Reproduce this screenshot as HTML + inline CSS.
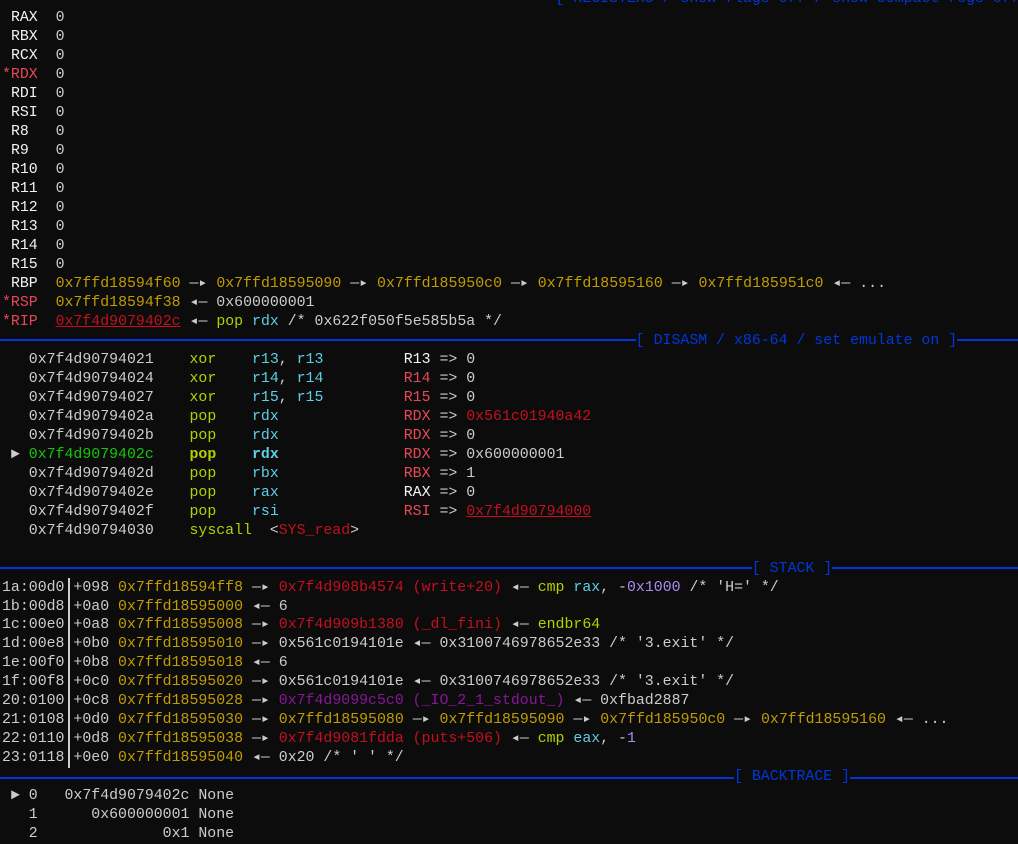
<!DOCTYPE html>
<html><head><meta charset="utf-8"><style>
html,body{margin:0;padding:0;background:#0c0c0c;width:1018px;height:843px;overflow:hidden}
pre{position:absolute;left:2px;top:-10px;margin:0;font-family:"Liberation Mono","DejaVu Sans Mono",monospace;font-size:14.88px;line-height:18.98px;color:#cccccc;white-space:pre}
.W{color:#f2f2f2}.R{color:#e74856}.r{color:#c50f1f}.y{color:#c19c00}.g{color:#16c60c}
.m{color:#b5cf00}.c{color:#5ccfe6}.p{color:#881798}.P{color:#a98bf0}.b{color:#0037da;background:#0c0c0c}
.u{text-decoration:underline}.B{font-weight:bold}
.hl{position:absolute;left:0;width:1018px;height:2px;background:#0037da}
.vl{position:absolute;left:68px;width:2px;background:#cccccc;top:578px;height:190px}
</style></head><body>
<div class="hl" style="top:339px"></div>
<div class="hl" style="top:567px"></div>
<div class="hl" style="top:777px"></div>
<div class="vl"></div>
<pre>                                                              <span class="b">[ REGISTERS / show-flags off / show-compact-regs off ]</span>
 <span class="W">RAX</span>  0
 <span class="W">RBX</span>  0
 <span class="W">RCX</span>  0
<span class="R">*RDX</span>  0
 <span class="W">RDI</span>  0
 <span class="W">RSI</span>  0
 <span class="W">R8</span>   0
 <span class="W">R9</span>   0
 <span class="W">R10</span>  0
 <span class="W">R11</span>  0
 <span class="W">R12</span>  0
 <span class="W">R13</span>  0
 <span class="W">R14</span>  0
 <span class="W">R15</span>  0
 <span class="W">RBP</span>  <span class="y">0x7ffd18594f60</span> —▸ <span class="y">0x7ffd18595090</span> —▸ <span class="y">0x7ffd185950c0</span> —▸ <span class="y">0x7ffd18595160</span> —▸ <span class="y">0x7ffd185951c0</span> ◂— ...
<span class="R">*RSP</span>  <span class="y">0x7ffd18594f38</span> ◂— 0x600000001
<span class="R">*RIP</span>  <span class="r u">0x7f4d9079402c</span> ◂— <span class="m">pop</span> <span class="c">rdx</span> /* 0x622f050f5e585b5a */
                                                                       <span class="b">[ DISASM / x86-64 / set emulate on ]</span>
   0x7f4d90794021    <span class="m">xor</span>    <span class="c">r13</span>, <span class="c">r13</span>         <span class="W">R13</span> =&gt; 0
   0x7f4d90794024    <span class="m">xor</span>    <span class="c">r14</span>, <span class="c">r14</span>         <span class="R">R14</span> =&gt; 0
   0x7f4d90794027    <span class="m">xor</span>    <span class="c">r15</span>, <span class="c">r15</span>         <span class="R">R15</span> =&gt; 0
   0x7f4d9079402a    <span class="m">pop</span>    <span class="c">rdx</span>              <span class="R">RDX</span> =&gt; <span class="r">0x561c01940a42</span>
   0x7f4d9079402b    <span class="m">pop</span>    <span class="c">rdx</span>              <span class="R">RDX</span> =&gt; 0
 ► <span class="g">0x7f4d9079402c</span>    <span class="m B">pop</span>    <span class="c B">rdx</span>              <span class="R">RDX</span> =&gt; 0x600000001
   0x7f4d9079402d    <span class="m">pop</span>    <span class="c">rbx</span>              <span class="R">RBX</span> =&gt; 1
   0x7f4d9079402e    <span class="m">pop</span>    <span class="c">rax</span>              <span class="W">RAX</span> =&gt; 0
   0x7f4d9079402f    <span class="m">pop</span>    <span class="c">rsi</span>              <span class="R">RSI</span> =&gt; <span class="r u">0x7f4d90794000</span>
   0x7f4d90794030    <span class="m">syscall</span>  &lt;<span class="r">SYS_read</span>&gt;

                                                                                    <span class="b">[ STACK ]</span>
1a:00d0 +098 <span class="y">0x7ffd18594ff8</span> —▸ <span class="r">0x7f4d908b4574 (write+20)</span> ◂— <span class="m">cmp</span> <span class="c">rax</span>, -<span class="P">0x1000</span> /* 'H=' */
1b:00d8 +0a0 <span class="y">0x7ffd18595000</span> ◂— 6
1c:00e0 +0a8 <span class="y">0x7ffd18595008</span> —▸ <span class="r">0x7f4d909b1380 (_dl_fini)</span> ◂— <span class="m">endbr64</span>
1d:00e8 +0b0 <span class="y">0x7ffd18595010</span> —▸ 0x561c0194101e ◂— 0x3100746978652e33 /* '3.exit' */
1e:00f0 +0b8 <span class="y">0x7ffd18595018</span> ◂— 6
1f:00f8 +0c0 <span class="y">0x7ffd18595020</span> —▸ 0x561c0194101e ◂— 0x3100746978652e33 /* '3.exit' */
20:0100 +0c8 <span class="y">0x7ffd18595028</span> —▸ <span class="p">0x7f4d9099c5c0 (_IO_2_1_stdout_)</span> ◂— 0xfbad2887
21:0108 +0d0 <span class="y">0x7ffd18595030</span> —▸ <span class="y">0x7ffd18595080</span> —▸ <span class="y">0x7ffd18595090</span> —▸ <span class="y">0x7ffd185950c0</span> —▸ <span class="y">0x7ffd18595160</span> ◂— ...
22:0110 +0d8 <span class="y">0x7ffd18595038</span> —▸ <span class="r">0x7f4d9081fdda (puts+506)</span> ◂— <span class="m">cmp</span> <span class="c">eax</span>, -<span class="P">1</span>
23:0118 +0e0 <span class="y">0x7ffd18595040</span> ◂— 0x20 /* ' ' */
                                                                                  <span class="b">[ BACKTRACE ]</span>
 ► 0   0x7f4d9079402c None
   1      0x600000001 None
   2              0x1 None
</pre>
</body></html>
